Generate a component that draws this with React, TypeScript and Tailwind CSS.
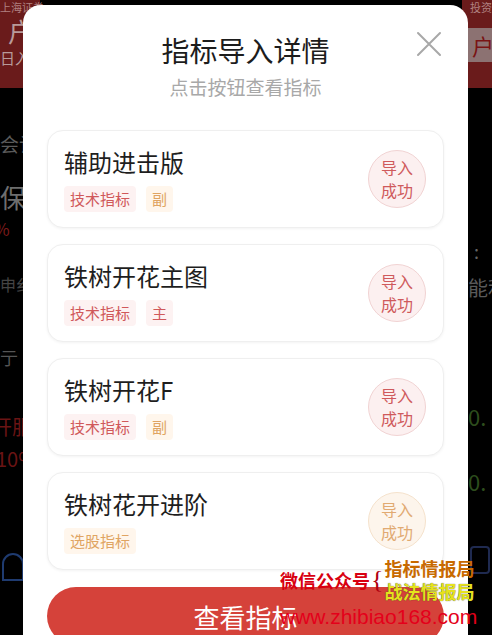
import React from "react";

type Item = {
  name: string;
  tags: { text: string; tone: "red" | "orange" }[];
  tone: "red" | "orange";
};

const items: Item[] = [
  { name: "辅助进击版", tags: [{ text: "技术指标", tone: "red" }, { text: "副", tone: "orange" }], tone: "red" },
  { name: "铁树开花主图", tags: [{ text: "技术指标", tone: "red" }, { text: "主", tone: "red" }], tone: "red" },
  { name: "铁树开花F", tags: [{ text: "技术指标", tone: "red" }, { text: "副", tone: "orange" }], tone: "red" },
  { name: "铁树花开进阶", tags: [{ text: "选股指标", tone: "orange" }], tone: "orange" },
];

const font = { fontFamily: '"Noto Sans CJK SC", "Noto Sans", sans-serif' };

function Tag({ text, tone }: { text: string; tone: "red" | "orange" }) {
  return tone === "red" ? (
    <span className="px-[6px] h-[26px] flex items-center rounded-[4px] bg-[#fdf2f2] text-[#d0585a] text-[15px]">{text}</span>
  ) : (
    <span className="px-[6px] h-[26px] flex items-center rounded-[4px] bg-[#fff6ec] text-[#e0a462] text-[15px]">{text}</span>
  );
}

function Card({ item }: { item: Item }) {
  return (
    <div className="h-[98px] rounded-[16px] border border-[#efefef] shadow-[0_1px_3px_rgba(0,0,0,0.05)] bg-white flex items-center pl-[16px] pr-[17px]">
      <div className="flex-1 flex flex-col">
        <div className="text-[24px] leading-[32px] text-[#1e1e1e]">{item.name}</div>
        <div className="flex gap-[10px] mt-[8px]">
          {item.tags.map((t, i) => (
            <Tag key={i} text={t.text} tone={t.tone} />
          ))}
        </div>
      </div>
      {item.tone === "red" ? (
        <div className="w-[58px] h-[58px] rounded-full bg-[#fcf0f0] border border-[#f1d3d3] flex flex-col items-center justify-center text-[#cf5a5c] text-[16px] leading-[23px]">
          <span>导入</span>
          <span>成功</span>
        </div>
      ) : (
        <div className="w-[58px] h-[58px] rounded-full bg-[#fdf5ec] border border-[#f5e2cc] flex flex-col items-center justify-center text-[#e1aa72] text-[16px] leading-[23px]">
          <span>导入</span>
          <span>成功</span>
        </div>
      )}
    </div>
  );
}

export default function App() {
  return (
    <div className="relative w-[492px] h-[635px] overflow-hidden bg-black" style={font}>
      {/* background app (dimmed), behind the modal */}
      <div className="absolute inset-0 flex justify-between">
        <div className="w-[40px] flex flex-col">
          <div className="h-[88px] bg-[#6a1b1b] flex flex-col">
            <div className="text-[11px] text-[#b08080] leading-[14px] whitespace-nowrap">上海证券</div>
            <div className="pl-[8px] text-[26px] text-[#b89a9a] leading-[34px]">户</div>
            <div className="text-[15px] text-[#b89a9a] leading-[20px] whitespace-nowrap">日入</div>
          </div>
          <div className="flex flex-col pt-[43px] whitespace-nowrap">
            <div className="text-[19px] leading-[26px] text-[#5a5a5a]">会计</div>
            <div className="mt-[24px] text-[26px] leading-[32px] text-[#6e6e6e]">保</div>
            <div className="mt-[6px] text-[17px] leading-[20px] text-[#7a1a1a] -ml-[6px]">%</div>
            <div className="mt-[34px] text-[16px] leading-[22px] text-[#444]">申纟</div>
            <div className="mt-[50px] text-[18px] leading-[24px] text-[#555]">亍</div>
            <div className="mt-[44px] text-[20px] leading-[28px] text-[#6a1414] -ml-[8px]">开服</div>
            <div className="mt-[4px] text-[20px] leading-[28px] text-[#6a1414] -ml-[4px]">10%</div>
            <div className="mt-[80px] ml-[2px] w-[22px] h-[28px] rounded-t-[12px] border-2 border-[#1f3b70]" />
          </div>
        </div>
        <div className="w-[30px] flex flex-col items-end">
          <div className="h-[88px] w-full bg-[#6a1b1b] flex flex-col items-end">
            <div className="text-[11px] text-[#b08080] leading-[14px] whitespace-nowrap">投资</div>
            <div className="mt-[14px] w-[24px] h-[34px] bg-[#8c7272] flex items-center pl-[4px] text-[22px] text-[#7a1414]">户</div>
          </div>
          <div className="flex flex-col w-[24px] pt-[150px] whitespace-nowrap">
            <div className="pl-[6px] text-[18px] leading-[26px] text-[#666]">:</div>
            <div className="mt-[10px] text-[20px] leading-[28px] text-[#5a5a5a]">能利</div>
            <div className="mt-[99px] text-[22px] leading-[30px] text-[#2d4d1d]">0.</div>
            <div className="mt-[35px] text-[22px] leading-[30px] text-[#2d4d1d]">0.</div>
            <div className="mt-[50px] ml-[2px] w-[20px] h-[28px] rounded-[4px] border-2 border-[#1f2a50]" />
          </div>
        </div>
      </div>

      {/* modal */}
      <div className="absolute left-[23px] top-[5px] w-[445px] h-[660px] bg-white rounded-[18px] flex flex-col px-[24px] pt-[27px]">
        <button className="absolute right-[26px] top-[26px] w-[26px] h-[26px]">
          <svg viewBox="0 0 26 26" width="26" height="26" fill="none" stroke="#a8a8a8" strokeWidth="2" strokeLinecap="round">
            <path d="M2 2 L24 24 M24 2 L2 24" />
          </svg>
        </button>
        <div className="text-center text-[28px] leading-[36px] text-[#1c1c1c]">指标导入详情</div>
        <div className="text-center text-[19px] leading-[26px] text-[#a8a8a8] mt-[6px]">点击按钮查看指标</div>
        <div className="flex flex-col gap-[16px] mt-[30px]">
          {items.map((it, i) => (
            <Card key={i} item={it} />
          ))}
        </div>
        <div className="mt-[17px] h-[58px] rounded-full bg-[#d5423a] flex items-center justify-center text-white text-[26px]">
          查看指标
        </div>
      </div>

      {/* watermark overlay */}
      <div className="absolute left-[280px] top-[557px] flex flex-col">
        <div className="flex items-center">
          <div className="text-[18px] leading-[22px] text-[#d80010] font-bold">微信公众号</div>
          <div className="ml-[1px] text-[26px] leading-[44px] text-[#b00010] font-thin" style={{ fontFamily: '"Liberation Serif", serif' }}>{"{"}</div>
          <div className="ml-[1px] flex flex-col">
            <div className="text-[18px] leading-[23px] text-[#c86a00] font-bold">指标情报局</div>
            <div className="text-[18px] leading-[23px] text-[#e6e21c] font-bold" style={{ textShadow: "0 0 1px #333" }}>战法情报局</div>
          </div>
        </div>
        <div className="text-[21px] leading-[28px] text-[#e4001a] whitespace-nowrap" style={{ fontFamily: '"Liberation Sans", Arial, sans-serif' }}>www.zhibiao168.com</div>
      </div>
    </div>
  );
}
